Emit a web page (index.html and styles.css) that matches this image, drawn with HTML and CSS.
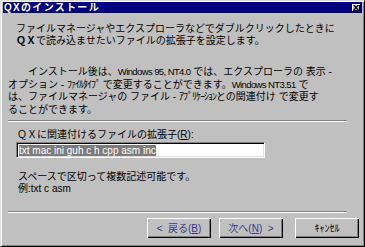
FILE: index.html
```html
<!doctype html>
<html lang="ja">
 <head>
  <meta charset="utf-8">
  <title>QXのインストール</title>
  <link rel="stylesheet" href="styles.css">
 </head>
 <body>
  <div class="dialog">
   <div class="titlebar">
    <span class="title">QXのインストール</span>
    <span class="close-btn">
     <svg width="6" height="5" viewBox="0 0 6 5"><path d="M0 0h1.5l1.5 1.5 1.5-1.5h1.5l-2.2 2.5 2.2 2.5h-1.5l-1.5-1.5-1.5 1.5h-1.5l2.2-2.5z" fill="#000"/></svg>
    </span>
   </div>
   <div class="content">
    <p class="intro">ファイルマネージャやエクスプローラなどでダブルクリックしたときに<br><b>ＱＸ</b>で読み込ませたいファイルの拡張子を設定します。</p>
    <p class="note">　　インストール後は、<span class="lat">Windows 95, NT4.0</span> では、エクスプローラの 表示 -<br>オプション - <span class="hw">ﾌｧｲﾙﾀｲﾌﾟ</span> で変更することができます。<span class="lat">Windows NT3.51</span> で<br>は、ファイルマネージャの ファイル - <span class="hw">ｱﾌﾟﾘｹｰｼｮﾝ</span>との関連付け で変更す<br>ることができます。</p>
    <div class="etched"></div>
    <div class="field">
     <label class="field-label">ＱＸに関連付けるファイルの拡張子(<u>R</u>):</label>
     <div class="textbox"><span class="selected">txt mac ini guh c h cpp asm inc</span></div>
     <p class="hint">スペースで区切って複数記述可能です。<br>例:txt c asm</p>
    </div>
    <div class="etched lower"></div>
    <div class="buttons">
     <button class="btn wizard">&lt;&nbsp; 戻る(<u>B</u>)</button>
     <button class="btn wizard">次へ(<u>N</u>) &nbsp;&gt;</button>
     <button class="btn cancel">ｷｬﾝｾﾙ</button>
    </div>
   </div>
  </div>
 </body>
</html>
```

FILE: styles.css
```css
/* classic win9x dialog, sized to the window */
html, body {
	margin: 0;
	padding: 0;
	background: #c0c0c0;
}

.dialog {
	width: 365px;
	height: 247px;
	box-sizing: border-box;
	background: #c0c0c0;
	border-top: 1px solid #dfdfdf;
	border-left: 1px solid #dfdfdf;
	border-right: 1px solid #000;
	border-bottom: 1px solid #000;
	box-shadow: inset 1px 1px 0 #fff, inset -1px -1px 0 #808080;
	padding: 1px 2px 0 2px;
	font-family: "Liberation Sans", "Noto Sans CJK JP", sans-serif;
	font-size: 10px;
	color: #000;
	display: flex;
	flex-direction: column;
}

.titlebar {
	height: 11px;
	background: #000080;
	display: flex;
	align-items: center;
	justify-content: space-between;
	padding: 0 2px 0 1px;
}

.title {
	color: #fff;
	font-weight: bold;
	font-size: 10px;
	line-height: 11px;
	letter-spacing: 1.3px;
}

.close-btn {
	width: 8px;
	height: 7px;
	background: #c0c0c0;
	box-shadow: inset 1px 1px 0 #fff, inset -1px -1px 0 #000;
	display: flex;
	align-items: center;
	justify-content: center;
}

.content {
	flex: 1;
	display: flex;
	flex-direction: column;
	padding: 0 0 0 5px;
}

.intro {
	margin: 10px 0 0 8px;
	line-height: 12px;
	white-space: nowrap;
}

.intro b {
	font-weight: bold;
}

.note {
	margin: 19px 0 0 0;
	line-height: 12.7px;
	white-space: nowrap;
}

.lat {
	font-size: 9.5px;
	letter-spacing: -0.6px;
}

.hw {
	letter-spacing: -1px;
}

.etched {
	width: 339px;
	height: 0;
	border-top: 1px solid #808080;
	border-bottom: 1px solid #fff;
	margin-top: 3px;
}

.etched.lower {
	margin-top: 15px;
}

.field {
	padding-left: 8px;
}

.field-label {
	display: block;
	margin: 7px 0 0 1px;
	line-height: 12px;
}

.textbox {
	width: 249px;
	height: 16px;
	box-sizing: border-box;
	margin-top: 1px;
	background: #fff;
	border-top: 1px solid #808080;
	border-left: 1px solid #808080;
	border-right: 1px solid #fff;
	border-bottom: 1px solid #fff;
	box-shadow: inset 1px 1px 0 #000, inset -1px -1px 0 #dfdfdf;
	padding: 2px 0 0 2px;
	display: flex;
	align-items: center;
}

.selected {
	background: #7b7b7b;
	color: #fff;
	line-height: 11px;
	white-space: nowrap;
}

.hint {
	margin: 13px 0 0 2px;
	line-height: 12.5px;
}

.buttons {
	display: flex;
	justify-content: flex-end;
	margin-top: 5px;
	padding-right: 3px;
}

.btn {
	width: 64px;
	height: 20px;
	padding: 0;
	margin: 0;
	border: none;
	background: #c0c0c0;
	box-shadow: inset 1px 1px 0 #fff, inset -1px -1px 0 #000, inset -2px -2px 0 #808080;
	font-family: "Liberation Sans", "Noto Sans CJK JP", sans-serif;
	font-size: 10px;
	color: #3a3a8a;
}

.btn + .btn {
	margin-left: 8px;
}

.btn.cancel {
	color: #000;
	margin-left: 12px;
}
```
